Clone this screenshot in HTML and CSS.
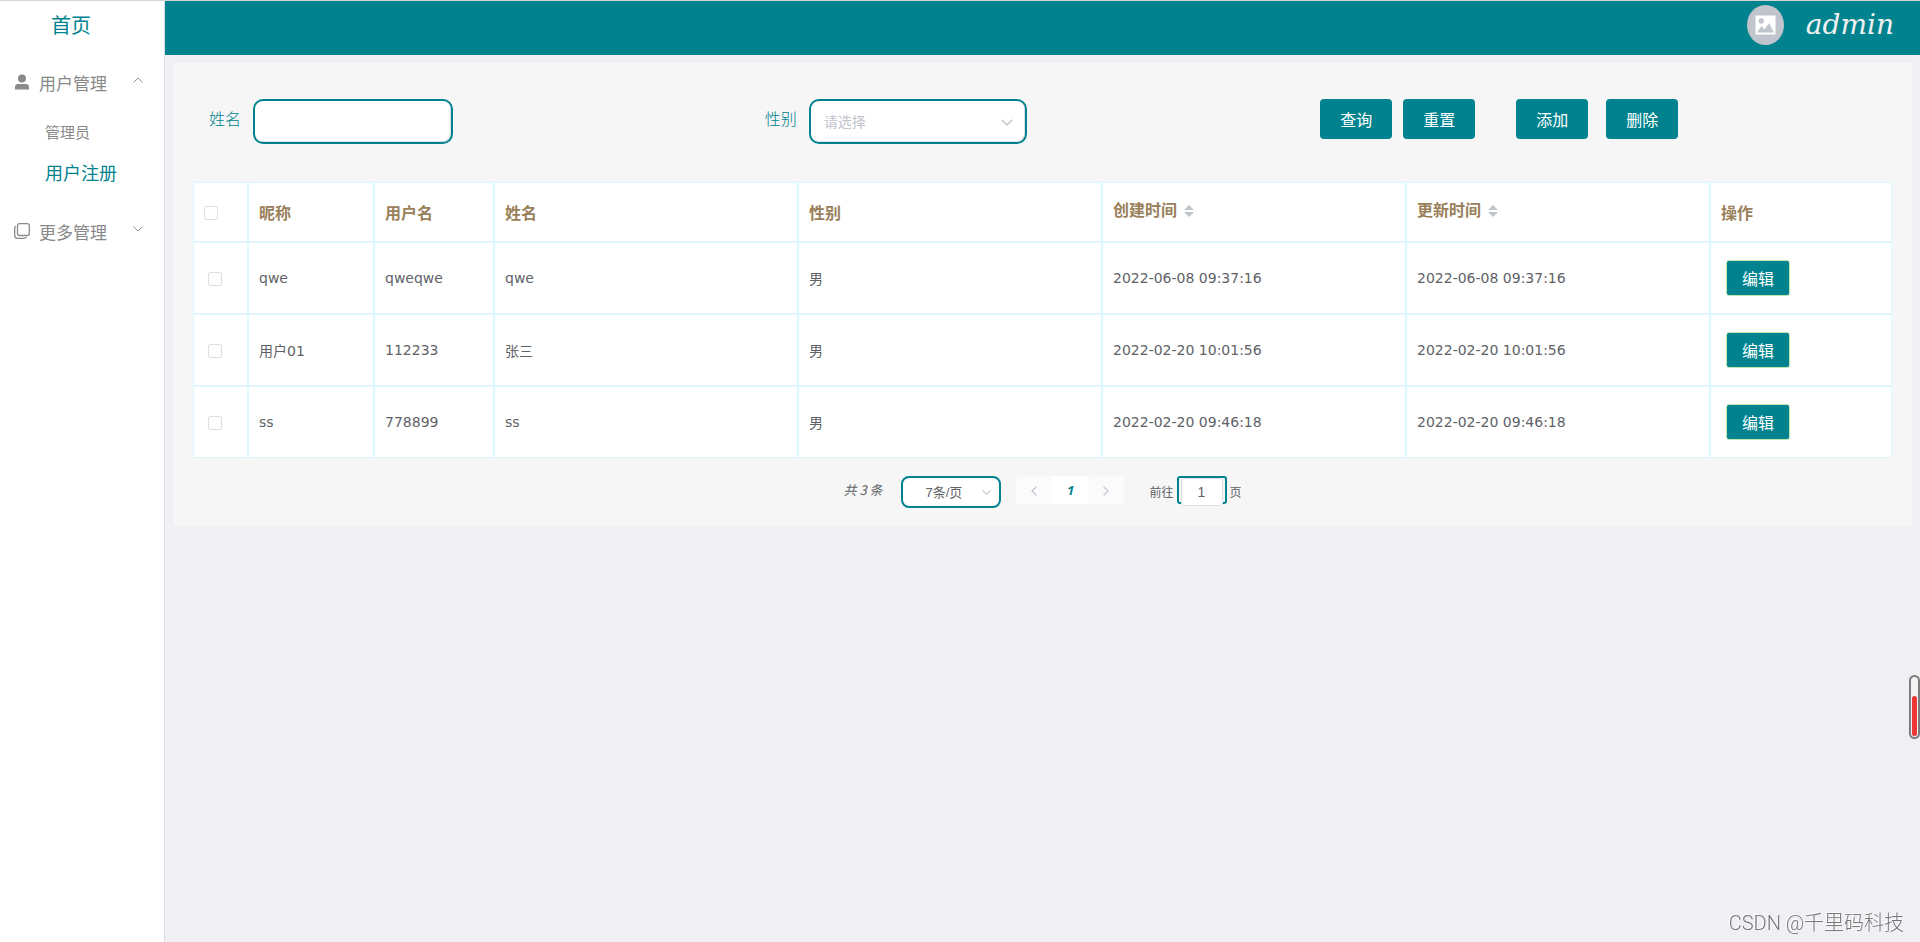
FILE: index.html
```html
<!DOCTYPE html>
<html lang="zh-CN">
<head>
    <meta charset="UTF-8">
    <meta name="viewport" content="width=device-width, initial-scale=1.0">
    <title>用户注册</title>
    <link rel="stylesheet" href="styles.css">
</head>
<body>

<aside class="sidebar">
    <a class="home" href="#">首页</a>
    <nav class="menu">
        <button class="menu-title" type="button" aria-expanded="true">
            <svg class="menu-icon" viewBox="0 0 16 16" fill="#8a8a8a">
                <circle cx="8" cy="4.5" r="4"/>
                <path d="M1 15.500V13q0-3 3-3h8q3 0 3 3v2.500z"/>
            </svg>
            <span>用户管理</span>
            <svg class="menu-arrow" viewBox="0 0 10 6"><path d="M.5 5.500 5 1l4.500 4.500"/></svg>
        </button>
        <div class="submenu">
            <a href="#">管理员</a>
            <a class="active" href="#">用户注册</a>
        </div>
        <button class="menu-title" type="button" aria-expanded="false">
            <svg class="menu-icon" viewBox="0 0 16 16" fill="none" stroke="#8a8a8a" stroke-width="1.3">
                <rect x="3.5" y=".7" width="11.8" height="11.8" rx="2"/>
                <path d="M1.700 3.200Q.7 3.700.7 5v7.500q0 2.800 2.800 2.800H10q1.700 0 2.500-1.300"/>
            </svg>
            <span>更多管理</span>
            <svg class="menu-arrow" viewBox="0 0 10 6"><path d="M.5.5 5 5 9.500.5"/></svg>
        </button>
    </nav>
</aside>

<div class="main">
    <header class="topbar">
        <svg class="avatar" viewBox="0 0 37 40">
            <ellipse cx="18.5" cy="20" rx="18.5" ry="20" fill="#c0c4cc"/>
            <rect x="8.5" y="10.5" width="20" height="19" fill="#fff"/>
            <circle cx="14.3" cy="16" r="2.7" fill="#c0c4cc"/>
            <path d="M10 27.500 14.500 21l3 3.500L22 18l5 9.500z" fill="#c0c4cc"/>
        </svg>
        <span class="username">admin</span>
    </header>

    <main class="panel">
        <form class="search">
            <div class="field">
                <label for="name">姓名</label>
                <input id="name" class="name-input" type="text">
            </div>
            <div class="field">
                <label for="sex">性别</label>
                <div class="select-box">
                    <select id="sex" class="sex-select">
                        <option value="">请选择</option>
                        <option>男</option>
                        <option>女</option>
                    </select>
                    <svg class="select-arrow" viewBox="0 0 12 7"><path d="M.8.8 6 6 11.200.8"/></svg>
                </div>
            </div>
            <div class="actions">
                <div class="query-buttons">
                    <button class="btn" type="button">查询</button>
                    <button class="btn" type="reset">重置</button>
                </div>
                <div class="edit-buttons">
                    <button class="btn" type="button">添加</button>
                    <button class="btn" type="button">删除</button>
                </div>
            </div>
        </form>

        <table class="users">
            <colgroup>
                <col class="col-check">
                <col class="col-nick">
                <col class="col-user">
                <col><col><col><col>
                <col class="col-op">
            </colgroup>
            <thead>
                <tr>
                    <th class="check-all"><input type="checkbox" aria-label="全选"></th>
                    <th>昵称</th>
                    <th>用户名</th>
                    <th>姓名</th>
                    <th>性别</th>
                    <th class="sortable">创建时间<svg class="caret" viewBox="0 0 10 12"><path d="M0 5 5 0l5 5zM0 7l5 5 5-5z"/></svg></th>
                    <th class="sortable">更新时间<svg class="caret" viewBox="0 0 10 12"><path d="M0 5 5 0l5 5zM0 7l5 5 5-5z"/></svg></th>
                    <th>操作</th>
                </tr>
            </thead>
            <tbody>
                <tr>
                    <td class="check"><input type="checkbox" aria-label="选择 qwe"></td>
                    <td>qwe</td>
                    <td>qweqwe</td>
                    <td>qwe</td>
                    <td>男</td>
                    <td>2022-06-08 09:37:16</td>
                    <td>2022-06-08 09:37:16</td>
                    <td><button class="btn-edit" type="button">编辑</button></td>
                </tr>
                <tr>
                    <td class="check"><input type="checkbox" aria-label="选择 用户01"></td>
                    <td>用户01</td>
                    <td>112233</td>
                    <td>张三</td>
                    <td>男</td>
                    <td>2022-02-20 10:01:56</td>
                    <td>2022-02-20 10:01:56</td>
                    <td><button class="btn-edit" type="button">编辑</button></td>
                </tr>
                <tr>
                    <td class="check"><input type="checkbox" aria-label="选择 ss"></td>
                    <td>ss</td>
                    <td>778899</td>
                    <td>ss</td>
                    <td>男</td>
                    <td>2022-02-20 09:46:18</td>
                    <td>2022-02-20 09:46:18</td>
                    <td><button class="btn-edit" type="button">编辑</button></td>
                </tr>
            </tbody>
        </table>

        <div class="pagination">
            <span class="total">共 3 条</span>
            <div class="select-box">
                <select class="size-select" aria-label="每页条数">
                    <option>7条/页</option>
                    <option>10条/页</option>
                </select>
                <svg class="select-arrow small" viewBox="0 0 12 7"><path d="M.8.8 6 6 11.200.8"/></svg>
            </div>
            <div class="pager">
                <button type="button" aria-label="上一页"><svg viewBox="0 0 6 10"><path d="M5.300.7 1 5l4.300 4.300"/></svg></button>
                <button class="current" type="button">1</button>
                <button type="button" aria-label="下一页"><svg viewBox="0 0 6 10"><path d="M.7.7 5 5 .7 9.300"/></svg></button>
            </div>
            <div class="jump">
                <label for="page">前往</label>
                <div class="jump-box"><input id="page" type="text" value="1"></div>
                <span>页</span>
            </div>
        </div>
    </main>
</div>

<div class="gauge"><div class="gauge-fill"></div></div>
<div class="watermark">CSDN @千里码科技</div>

</body>
</html>
```
FILE: styles.css
```css
* {
    box-sizing: border-box;
}
body {
    display: flex;
    min-height: 100vh;
    margin: 0;
    border-top: 1px solid #d5d5d5;
    background-color: #efeff4;
    font-family: "DejaVu Sans", "Noto Sans CJK SC", sans-serif;
    font-size: 14px;
    color: #606266;
}
button, input, select {
    margin: 0;
    font-family: inherit;
}
a {
    text-decoration: none;
}

/* sidebar */
.sidebar {
    flex: none;
    width: 165px;
    border-right: 1px solid #e0e0e4;
    background-color: #fff;
    font-family: "Noto Sans CJK SC", sans-serif;
}
.home {
    display: block;
    padding-left: 51px;
    line-height: 48px;
    font-size: 20px;
    color: #00838f;
}
.menu {
    padding-top: 3px;
}
.menu-title {
    display: flex;
    align-items: center;
    width: 100%;
    height: 60px;
    padding: 0 21px 0 14px;
    border: 0;
    background: none;
    font-size: 17px;
    color: #888;
}
.menu-icon {
    width: 16px;
    height: 16px;
    margin-right: 9px;
}
.menu-arrow {
    width: 10px;
    height: 6px;
    margin-left: auto;
    margin-bottom: 4px;
    fill: none;
    stroke: #909399;
}
.submenu {
    margin-bottom: 9px;
}
.submenu a {
    display: block;
    padding-left: 45px;
    line-height: 40px;
    font-size: 15px;
    color: #888;
}
.submenu a.active {
    font-size: 18px;
    color: #00838f;
}

/* header */
.main {
    flex: 1;
    min-width: 0;
}
.topbar {
    display: flex;
    justify-content: flex-end;
    height: 54px;
    padding: 4px 26px 0 0;
    background-color: #00838f;
}
.avatar {
    width: 37px;
    height: 40px;
    margin-right: 22px;
}
.username {
    line-height: 40px;
    font-family: "Lucida Handwriting", "DejaVu Serif", serif;
    font-size: 28px;
    font-style: italic;
    color: #f0f0f0;
}

/* search form */
.panel {
    margin: 8px;
    padding: 36px 20px 18px;
    background-color: #f6f6f6;
}
.search {
    display: grid;
    grid-template-columns: repeat(3, 1fr);
    margin-bottom: 38px;
    padding: 0 16px;
}
.field {
    display: flex;
    gap: 12px;
}
.field label {
    line-height: 38px;
    font-family: KaiTi, "Noto Sans CJK SC", sans-serif;
    font-size: 16px;
    font-weight: 300;
    color: #00838f;
}
.name-input, .sex-select {
    height: 45px;
    border: 2px solid #00838f;
    border-radius: 10px;
    background-color: #fff;
    box-shadow: inset -1px -1px 0 #dcdfe6;
    font-size: 14px;
}
.name-input {
    width: 200px;
    padding: 0 13px;
}
.select-box {
    position: relative;
}
.select-box select {
    appearance: none;
    font-family: "Liberation Sans", "Noto Sans CJK SC", sans-serif;
}
.sex-select {
    width: 218px;
    padding: 0 13px;
    color: #c0c4cc;
}
.select-arrow {
    position: absolute;
    top: 50%;
    right: 14px;
    width: 12px;
    height: 7px;
    margin-top: -3px;
    fill: none;
    stroke: #c0c4cc;
    stroke-width: 1.4;
    pointer-events: none;
}
.actions {
    display: flex;
    gap: 41px;
}
.query-buttons, .edit-buttons {
    display: flex;
    align-items: flex-start;
    gap: 11px;
}
.edit-buttons {
    gap: 18px;
}
.btn {
    width: 72px;
    height: 40px;
    padding: 0;
    border: 0;
    border-radius: 4px;
    background-color: #00838f;
    font-size: 16px;
    color: #fff;
}

/* table */
.users {
    width: 100%;
    table-layout: fixed;
    border-collapse: separate;
    border-spacing: 0;
    background-color: #fff;
}
.col-check {
    width: 55px;
}
.col-nick {
    width: 126px;
}
.col-user {
    width: 120px;
}
.col-op {
    width: 182px;
}
.users th, .users td {
    padding: 0 10px;
    border: 1px solid #d9faff;
    border-bottom-color: #e4f2fa;
    text-align: left;
}
.users th {
    height: 60px;
    font-size: 16px;
    font-weight: 700;
    color: #99805a;
}
.users th.sortable {
    padding-bottom: 6px;
}
.users td {
    height: 72px;
}
.users th.check-all, .users td.check {
    padding-top: 2px;
}
.users td.check {
    padding-left: 14px;
}
.users input {
    display: block;
    appearance: none;
    width: 14px;
    height: 14px;
    border: 1px solid #dcdfe6;
    border-radius: 2px;
    background-color: #fff;
}
.caret {
    width: 10px;
    height: 12px;
    margin-left: 7px;
    vertical-align: -1px;
    fill: #c0c4cc;
}
.btn-edit {
    display: block;
    width: 64px;
    height: 36px;
    margin-left: 5px;
    padding: 0;
    border: 1px solid #c2e7b0;
    border-radius: 3px;
    background-color: #00838f;
    font-size: 16px;
    color: #fff;
}

/* pagination */
.pagination {
    display: flex;
    justify-content: center;
    margin-top: 18px;
    font-family: KaiTi, "Noto Sans CJK SC", sans-serif;
    font-size: 12px;
}
.total {
    min-width: 43px;
    margin-right: 15px;
    line-height: 28px;
    font-size: 13px;
    font-style: italic;
}
.size-select {
    width: 100px;
    height: 32px;
    padding: 0 22px;
    border: 2px solid #00838f;
    border-radius: 8px;
    background-color: #fff;
    font-size: 13px;
    color: #606266;
}
.select-arrow.small {
    right: 10px;
    width: 9px;
}
.pager {
    display: flex;
    margin: 0 25px 0 15px;
}
.pager button {
    width: 36px;
    height: 28px;
    padding: 0;
    border: 0;
    border-radius: 3px;
    background-color: #fbfbfb;
}
.pager .current {
    border-radius: 0;
    background-color: #fff;
    font-family: "Noto Sans", sans-serif;
    font-size: 13px;
    font-style: italic;
    font-weight: 700;
    color: #00838f;
}
.pager svg {
    width: 6px;
    height: 10px;
    fill: none;
    stroke: #c8ccd4;
    stroke-width: 1.5;
}
.jump {
    display: flex;
    gap: 3px;
    line-height: 32px;
}
.jump-box {
    width: 50px;
    height: 28px;
    padding: 0 2px;
    border: 2px solid #00838f;
    border-radius: 3px;
}
.jump-box input {
    display: block;
    width: 42px;
    height: 28px;
    padding: 0;
    border: 1px solid #dcdfe6;
    border-radius: 3px;
    background-color: #fff;
    font-family: "Liberation Sans", sans-serif;
    font-size: 14px;
    text-align: center;
    color: #606266;
}

/* floating things */
.gauge {
    position: fixed;
    right: 0;
    bottom: 203px;
    display: flex;
    align-items: flex-end;
    width: 11px;
    height: 64px;
    padding: 1px;
    border: 2px solid #7c7c7c;
    border-radius: 6px;
    background-color: #f4f4f4;
}
.gauge-fill {
    width: 100%;
    height: 40px;
    border-radius: 3px;
    background-color: #f03535;
}
.watermark {
    position: fixed;
    right: 16px;
    bottom: 5px;
    line-height: 28px;
    font-family: Roboto, "Noto Sans CJK SC", sans-serif;
    font-size: 20px;
    font-weight: 300;
    color: #777;
    text-shadow: -1px -1px 0 #fff;
}
```
